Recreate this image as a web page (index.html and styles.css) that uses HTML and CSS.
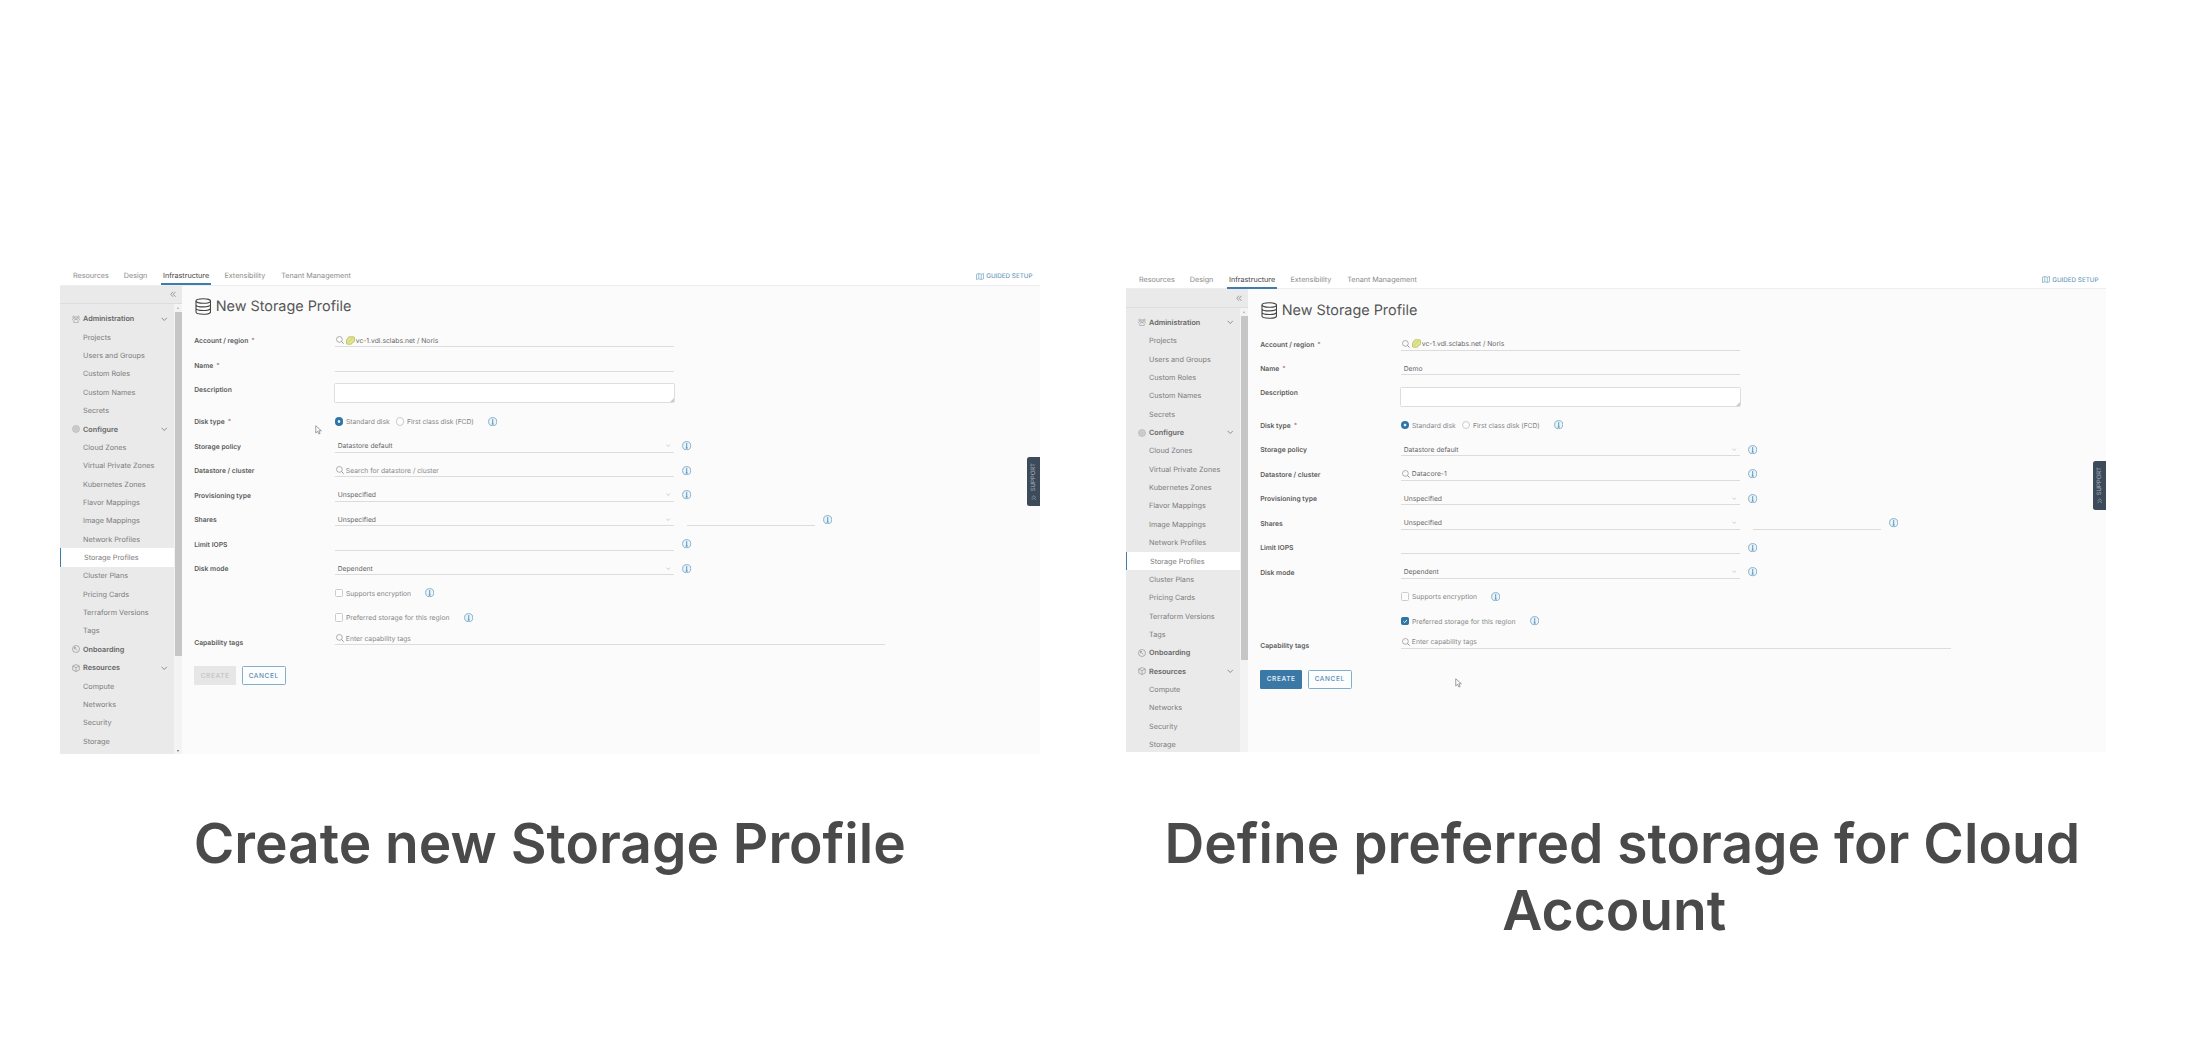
FILE: index.html
```
<!DOCTYPE html>
<html lang="en">
<head>
<meta charset="utf-8">
<title>Storage Profiles</title>
<link rel="stylesheet" href="styles.css">
</head>
<body>
<svg class="defs" aria-hidden="true">
  <symbol id="info" viewBox="0 0 18 18"><circle cx="9" cy="9" r="7.8" fill="#eaf4fa" stroke="#79a8c6" stroke-width="1.700"/><path d="M9 4v10M7 13.500h4" fill="none" stroke="#5089b0" stroke-width="1.700"/></symbol>
  <symbol id="search" viewBox="0 0 18 18"><circle cx="7.700" cy="7.700" r="6.500" fill="none" stroke="currentColor" stroke-width="1.500"/><path d="M12.400 12.400l4.800 4.800" stroke="currentColor" stroke-width="2"/></symbol>
  <symbol id="chev" viewBox="0 0 12 8"><path d="M1 1.5l5 5 5-5" fill="none" stroke="currentColor" stroke-width="1.5"/></symbol>
  <symbol id="db" viewBox="0 0 32 34"><g fill="none" stroke="#444" stroke-width="2.200"><ellipse cx="16" cy="6" rx="14.500" ry="4.6"/><path d="M1.500 6v22c0 6 29 6 29 0V6M1.500 13.3c0 6 29 6 29 0M1.500 20.6c0 6 29 6 29 0"/></g></symbol>
  <symbol id="vc" viewBox="0 0 18 18"><path d="M6.500 1.500h8.500a2 2 0 0 1 2 2v6c0 2-2 3-4 3 0 2-1.500 4-4 4H3a2 2 0 0 1-2-2V8.500c0-2 1.500-3 3-3 0-2 .5-4 2.500-4z" fill="#e3e58e" stroke="#a9b04c" stroke-width="1.300"/><path d="M4 13l9-9" stroke="#c3c76a" stroke-width="1.500"/></symbol>
  <symbol id="admin" viewBox="0 0 16 16"><g fill="none" stroke="#999" stroke-width="1.2"><circle cx="8" cy="6" r="2.600"/><circle cx="3.200" cy="4" r="1.800"/><circle cx="12.800" cy="4" r="1.800"/><path d="M3.500 15V12c0-4 9-4 9 0v3zM1 10.500V8.500c0-1 1.500-1.500 2.500-1.500M15 10.500V8.500c0-1-1.500-1.500-2.500-1.500"/></g></symbol>
  <symbol id="gear" viewBox="0 0 16 16"><g fill="none" stroke="#999" stroke-width="1.200"><circle cx="8" cy="8" r="6.800"/><circle cx="8" cy="8" r="4.800" stroke-width=".8"/><circle cx="8" cy="8" r="2.400"/></g></symbol>
  <symbol id="board" viewBox="0 0 16 16"><g fill="none" stroke="#888" stroke-width="1.200"><circle cx="8" cy="8" r="7"/><path d="M4.500 5l6 5.500M5 8.500V5h3"/></g></symbol>
  <symbol id="cube" viewBox="0 0 16 16"><path d="M8 1l6.500 3v8L8 15l-6.500-3V4zM1.500 4L8 7.300 14.500 4M8 7.300V15" fill="none" stroke="#888" stroke-width="1.200"/></symbol>
  <symbol id="map" viewBox="0 0 16 14"><path d="M1 2.500l4.500-1.500 5 1.500L15 1v10.500L10.500 13l-5-1.500L1 13zM5.500 1v10.500M10.500 2.500V13" fill="none" stroke="#6b9dbd" stroke-width="1.300"/></symbol>
  <symbol id="collapse" viewBox="0 0 12 12"><path d="M6 1L1.500 6 6 11M11 1L6.500 6 11 11" fill="none" stroke="#777" stroke-width="1.400"/></symbol>
  <symbol id="cursor" viewBox="0 0 14 20"><path d="M1.500 1.500v14.500l3.700-3.500 2.500 5.500 2.500-1-2.500-5.500h5z" fill="#fff" stroke="#777" stroke-width="1.400"/></symbol>
  <symbol id="up2" viewBox="0 0 12 12"><path d="M1 6l5-4.500L11 6M1 11l5-4.500 5 4.500" fill="none" stroke="#aab4be" stroke-width="1.300"/></symbol>
</svg>

<main class="slide">
<section class="column">
  <div class="app">
    <header class="tabs">
      <a class="t1">Resources</a><a class="t2">Design</a><a class="t3 on">Infrastructure</a><a class="t4">Extensibility</a><a>Tenant Management</a>
      <span class="guided"><svg><use href="#map"/></svg>GUIDED SETUP</span>
    </header>
    <div class="body">
      <aside class="side">
        <div class="collapse"><svg><use href="#collapse"/></svg></div>
        <div class="scroller">
          <nav>
            <h3><svg><use href="#admin"/></svg>Administration<svg class="fold"><use href="#chev"/></svg></h3>
            <a>Projects</a><a>Users and Groups</a><a>Custom Roles</a><a>Custom Names</a><a>Secrets</a>
            <h3><svg><use href="#gear"/></svg>Configure<svg class="fold"><use href="#chev"/></svg></h3>
            <a>Cloud Zones</a><a>Virtual Private Zones</a><a>Kubernetes Zones</a><a>Flavor Mappings</a><a>Image Mappings</a><a>Network Profiles</a><a class="current">Storage Profiles</a><a>Cluster Plans</a><a>Pricing Cards</a><a>Terraform Versions</a><a>Tags</a>
            <h3><svg><use href="#board"/></svg>Onboarding</h3>
            <h3><svg><use href="#cube"/></svg>Resources<svg class="fold"><use href="#chev"/></svg></h3>
            <a>Compute</a><a>Networks</a><a>Security</a><a>Storage</a>
          </nav>
          <div class="bar"><i class="up"></i><b></b><i class="down"></i></div>
        </div>
      </aside>
      <div class="content">
        <h1><svg><use href="#db"/></svg>New Storage Profile</h1>
        <div class="row"><label>Account / region <sup>*</sup></label><div class="field icon"><svg class="s"><use href="#search"/></svg><svg class="v"><use href="#vc"/></svg>vc-1.vdi.sclabs.net / Noris</div></div>
        <div class="row"><label>Name <sup>*</sup></label><div class="field"></div></div>
        <div class="row desc"><label>Description</label><div class="area"></div></div>
        <div class="row opt"><label>Disk type <sup>*</sup></label><i class="radio on"></i><span class="r1">Standard disk</span><i class="radio"></i><span class="r2">First class disk (FCD)</span><svg class="info gap"><use href="#info"/></svg></div>
        <div class="row"><label>Storage policy</label><div class="field">Datastore default<svg class="c"><use href="#chev"/></svg></div><svg class="info"><use href="#info"/></svg></div>
        <div class="row"><label>Datastore / cluster</label><div class="field icon hint"><svg class="s"><use href="#search"/></svg>Search for datastore / cluster</div><svg class="info"><use href="#info"/></svg></div>
        <div class="row"><label>Provisioning type</label><div class="field">Unspecified<svg class="c"><use href="#chev"/></svg></div><svg class="info"><use href="#info"/></svg></div>
        <div class="row"><label>Shares</label><div class="field">Unspecified<svg class="c"><use href="#chev"/></svg></div><div class="field extra"></div><svg class="info"><use href="#info"/></svg></div>
        <div class="row"><label>Limit IOPS</label><div class="field"></div><svg class="info"><use href="#info"/></svg></div>
        <div class="row"><label>Disk mode</label><div class="field">Dependent<svg class="c"><use href="#chev"/></svg></div><svg class="info"><use href="#info"/></svg></div>
        <div class="row opt"><label></label><i class="check"></i><span>Supports encryption</span><svg class="info gap"><use href="#info"/></svg></div>
        <div class="row opt"><label></label><i class="check"></i><span class="pref">Preferred storage for this region</span><svg class="info gap"><use href="#info"/></svg></div>
        <div class="row tags"><label>Capability tags</label><div class="field icon wide hint"><svg class="s"><use href="#search"/></svg>Enter capability tags</div></div>
        <div class="buttons"><button class="create" disabled>CREATE</button><button class="cancel">CANCEL</button></div>
      </div>
    </div>
    <div class="support"><svg><use href="#up2"/></svg><span>SUPPORT</span></div>
    <svg class="cursor" style="left:255px;top:159px"><use href="#cursor"/></svg>
  </div>
  <h2>Create new Storage Profile</h2>
</section>

<section class="column second">
  <div class="app">
    <header class="tabs">
      <a class="t1">Resources</a><a class="t2">Design</a><a class="t3 on">Infrastructure</a><a class="t4">Extensibility</a><a>Tenant Management</a>
      <span class="guided"><svg><use href="#map"/></svg>GUIDED SETUP</span>
    </header>
    <div class="body">
      <aside class="side">
        <div class="collapse"><svg><use href="#collapse"/></svg></div>
        <div class="scroller">
          <nav>
            <h3><svg><use href="#admin"/></svg>Administration<svg class="fold"><use href="#chev"/></svg></h3>
            <a>Projects</a><a>Users and Groups</a><a>Custom Roles</a><a>Custom Names</a><a>Secrets</a>
            <h3><svg><use href="#gear"/></svg>Configure<svg class="fold"><use href="#chev"/></svg></h3>
            <a>Cloud Zones</a><a>Virtual Private Zones</a><a>Kubernetes Zones</a><a>Flavor Mappings</a><a>Image Mappings</a><a>Network Profiles</a><a class="current">Storage Profiles</a><a>Cluster Plans</a><a>Pricing Cards</a><a>Terraform Versions</a><a>Tags</a>
            <h3><svg><use href="#board"/></svg>Onboarding</h3>
            <h3><svg><use href="#cube"/></svg>Resources<svg class="fold"><use href="#chev"/></svg></h3>
            <a>Compute</a><a>Networks</a><a>Security</a><a>Storage</a>
          </nav>
          <div class="bar"><i class="up"></i><b></b></div>
        </div>
      </aside>
      <div class="content">
        <h1><svg><use href="#db"/></svg>New Storage Profile</h1>
        <div class="row"><label>Account / region <sup>*</sup></label><div class="field icon"><svg class="s"><use href="#search"/></svg><svg class="v"><use href="#vc"/></svg>vc-1.vdi.sclabs.net / Noris</div></div>
        <div class="row"><label>Name <sup>*</sup></label><div class="field">Demo</div></div>
        <div class="row desc"><label>Description</label><div class="area"></div></div>
        <div class="row opt"><label>Disk type <sup>*</sup></label><i class="radio on"></i><span class="r1">Standard disk</span><i class="radio"></i><span class="r2">First class disk (FCD)</span><svg class="info gap"><use href="#info"/></svg></div>
        <div class="row"><label>Storage policy</label><div class="field">Datastore default<svg class="c"><use href="#chev"/></svg></div><svg class="info"><use href="#info"/></svg></div>
        <div class="row"><label>Datastore / cluster</label><div class="field icon"><svg class="s"><use href="#search"/></svg>Datacore-1</div><svg class="info"><use href="#info"/></svg></div>
        <div class="row"><label>Provisioning type</label><div class="field">Unspecified<svg class="c"><use href="#chev"/></svg></div><svg class="info"><use href="#info"/></svg></div>
        <div class="row"><label>Shares</label><div class="field">Unspecified<svg class="c"><use href="#chev"/></svg></div><div class="field extra"></div><svg class="info"><use href="#info"/></svg></div>
        <div class="row"><label>Limit IOPS</label><div class="field"></div><svg class="info"><use href="#info"/></svg></div>
        <div class="row"><label>Disk mode</label><div class="field">Dependent<svg class="c"><use href="#chev"/></svg></div><svg class="info"><use href="#info"/></svg></div>
        <div class="row opt"><label></label><i class="check"></i><span>Supports encryption</span><svg class="info gap"><use href="#info"/></svg></div>
        <div class="row opt"><label></label><i class="check on"><svg viewBox="0 0 9 9"><path d="M2 4.600l1.800 1.800L7 2.800" fill="none" stroke="#fff" stroke-width="1.300"/></svg></i><span class="pref">Preferred storage for this region</span><svg class="info gap"><use href="#info"/></svg></div>
        <div class="row tags"><label>Capability tags</label><div class="field icon wide hint"><svg class="s"><use href="#search"/></svg>Enter capability tags</div></div>
        <div class="buttons"><button class="create">CREATE</button><button class="cancel">CANCEL</button></div>
      </div>
    </div>
    <div class="support"><svg><use href="#up2"/></svg><span>SUPPORT</span></div>
    <svg class="cursor" style="left:329px;top:408px"><use href="#cursor"/></svg>
  </div>
  <h2><span class="lead">Define preferred storage for Cloud</span> <span class="rest">Account</span></h2>
</section>
</main>
</body>
</html>
```
FILE: styles.css
```
* { box-sizing: border-box; }
body {
  margin: 0;
  background: #fff;
  font-family: Inter, "Open Sans", sans-serif;
  text-rendering: geometricPrecision;
}
svg { flex: none; display: block; }
.defs { position: absolute; width: 0; height: 0; }

.slide {
  display: flex;
  gap: 86.500px;
  height: 1054px;
  padding: 266px 0 0 60px;
  overflow: hidden;
}
.column { width: 979.500px; flex: none; }
.second { padding-top: 3.500px; }

.app {
  position: relative;
  display: flex;
  flex-direction: column;
  height: 488px;
  overflow: hidden;
}
.second .app { height: 482.500px; }

/* top tabs */
.tabs {
  display: flex;
  flex: none;
  height: 19.500px;
  padding-left: 13px;
  border-bottom: 1.500px solid #eee;
  font-size: 7.200px;
  line-height: 20px;
  color: #8a8a8a;
}
.tabs a { height: 19px; white-space: nowrap; }
.t1 { width: 50.800px; }
.t2 { width: 37.700px; }
.t3 { width: 49.500px; margin-right: 13.500px; }
.t3.on { color: #444; border-bottom: 2px solid #3d7cab; padding-left: 1.500px; }
.t4 { width: 56.700px; }
.guided {
  display: flex;
  align-items: center;
  gap: 2.500px;
  height: 20px;
  margin-left: auto;
  padding-right: 7px;
  font-size: 6.300px;
  font-weight: 500;
  color: #6b9dbd;
}
.guided svg { width: 8px; height: 7px; }

.body { display: flex; flex: 1; min-height: 0; background: #fbfbfb; }

/* sidebar */
.side { width: 122px; flex: none; background: #eaeaea; }
.collapse {
  height: 18.500px;
  padding: 5.500px 0 0 110px;
  border-bottom: 1px solid #ddd;
}
.collapse svg { width: 6px; height: 6.500px; }
.scroller { display: flex; height: 100%; }
nav { width: 114px; padding-top: 5.700px; }
nav a, nav h3 {
  display: flex;
  align-items: center;
  height: 18.360px;
  margin: 0;
  padding-left: 23px;
  font-size: 7.250px;
  font-weight: 400;
  color: #7d7d7d;
  white-space: nowrap;
}
nav h3 { padding-left: 12px; font-weight: 600; color: #666; }
nav h3 svg { width: 8px; height: 8px; margin-right: 3px; }
nav h3 .fold { width: 6.500px; height: 4.300px; margin: 0 6.500px 0 auto; color: #777; }
nav .current { background: #fff; border-left: 1.200px solid #3d7cab; }
.bar {
  display: flex;
  flex-direction: column;
  align-items: center;
  width: 8px;
  height: 450px;
  padding-top: 3px;
  background: #f3f3f3;
}
.bar b { width: 7px; height: 344px; margin-top: 3px; background: #c6c6c6; }
.bar i { border: 1.500px solid transparent; }
.bar .up { border-bottom: 2px solid #aaa; border-top: 0; }
.bar .down { margin-top: 94px; border-top: 2px solid #666; border-bottom: 0; }

/* form */
.content { padding-left: 12.200px; flex: 1; }
h1 {
  display: flex;
  align-items: center;
  gap: 4.300px;
  height: 17px;
  margin: 12.500px 0 13.250px;
  font-size: 14.400px;
  font-weight: 400;
  color: #555;
}
h1 svg { width: 16.500px; height: 17px; margin-left: .7px; }
.row {
  display: flex;
  height: 24.500px;
  align-items: center;
  font-size: 6.750px;
  color: #555;
}
.row label { width: 140.700px; flex: none; font-weight: 600; color: #5c5c5c; }
.row sup { margin-left: 1.500px; font-size: 6px; line-height: 0; font-weight: 400; color: #a66; vertical-align: 1px; }
.field {
  display: flex;
  align-items: center;
  width: 339.500px;
  height: 13px;
  padding-left: 2.800px;
  border-bottom: 1px solid #dcdcdc;
  color: #666;
}
.field.icon { padding-left: .7px; }
.field.hint { color: #888; }
.field .s { width: 8px; height: 8px; margin-right: 2.300px; color: #888; }
.field .v { width: 9px; height: 9px; margin: 0 1.200px 0 -.3px; }
.field .c { width: 4.500px; height: 3px; margin: 0 3.500px 0 auto; color: #aaa; }
.field.extra { width: 128px; margin: 0 0 0 12.500px; }
.field.wide { width: 550px; }
.info { width: 9.400px; height: 9.400px; margin-left: 8px; }
.desc { height: 32px; align-items: flex-start; line-height: 24.500px; }
.desc label { padding-top: .4px; }
.area {
  position: relative;
  width: 340.500px;
  height: 19.700px;
  margin: 6.200px 0 0 -.5px;
  background: #fff;
  border: 1px solid #ddd;
  border-radius: 1.500px;
}
.area::after {
  content: "";
  position: absolute;
  right: 0;
  bottom: 0;
  border: 2.500px solid;
  border-color: transparent #ccc #ccc transparent;
}
.opt { color: #858585; }
.radio, .check {
  width: 8.400px;
  height: 8.400px;
  flex: none;
  border: 1px solid #ccc;
  border-radius: 50%;
  margin-right: 2.700px;
  background: #fdfdfd;
}
.radio.on { border: none; background: radial-gradient(circle, #e8f1f7 1px, #2f75a5 1.700px); }
.r1 { width: 50px; }
.r2 { letter-spacing: -.05px; }
.pref { letter-spacing: .04px; }
.check { border-radius: 1.500px; }
.check.on { background: #2f75a5; border-color: #2f75a5; }
.check.on svg { width: 6.400px; height: 6.400px; }
.info.gap { margin-left: 14px; }
.tags .field { margin-top: -6.500px; }
.buttons { display: flex; gap: 5.500px; margin-top: 12.200px; }
button {
  width: 42px;
  height: 19px;
  padding: 0;
  border: 1px solid #e6e6e6;
  border-radius: 1px;
  background: #e6e6e6;
  color: #c8c8c8;
  font: 600 6.500px Inter, sans-serif;
  letter-spacing: .6px;
}
.second .create { background: #3c78a5; border-color: #3c78a5; color: #dcebf5; }
button.cancel { width: 44px; background: #fcfdfe; border-color: #84adc8; color: #5b8bae; font-weight: 500; border-radius: 1.500px; }

.support {
  position: absolute;
  right: 0;
  top: 191.300px;
  display: flex;
  flex-direction: column-reverse;
  align-items: center;
  justify-content: center;
  gap: 3px;
  width: 12.500px;
  height: 49px;
  border-radius: 2.500px 0 0 2.500px;
  background: #3c4a59;
  color: #aab4be;
  font-size: 6px;
}
.support span { writing-mode: vertical-rl; transform: rotate(180deg); }
.support svg { width: 5.500px; height: 5.500px; }
.cursor { position: absolute; width: 7px; height: 10px; }

/* captions */
h2 {
  margin: 56.500px 0 0 0;
  font-size: 55.100px;
  line-height: 67px;
  font-weight: 600;
  text-align: center;
  color: #4a4a4a;
}
.second h2 { margin-top: 58.500px; }
.lead, .rest { display: block; white-space: nowrap; }
.lead { padding-left: 13px; }
.rest { padding-right: 3px; }
```
